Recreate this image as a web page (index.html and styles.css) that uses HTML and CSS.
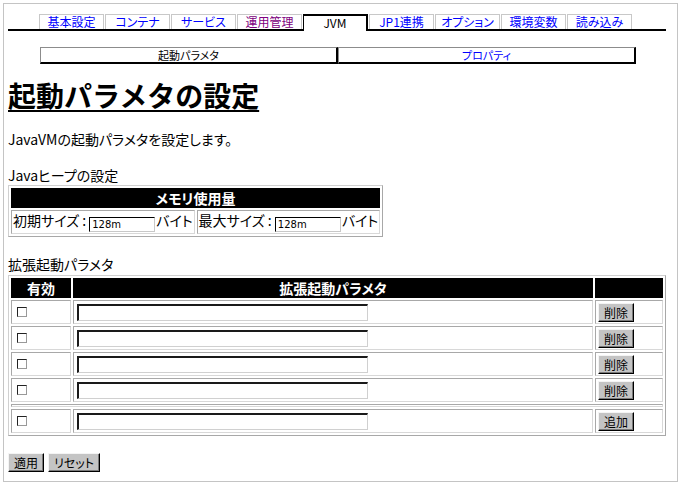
FILE: index.html
```html
<!DOCTYPE html>
<html lang="ja">
<head>
<meta charset="utf-8">
<title>起動パラメタの設定</title>
<link rel="stylesheet" href="styles.css">
</head>
<body>
<div class="frame">
  <div class="content">
    <ul class="tabs">
      <li class="tab"><a class="link">基本設定</a></li>
      <li class="tab"><a class="link">コンテナ</a></li>
      <li class="tab"><a class="link">サービス</a></li>
      <li class="tab"><a class="link visited">運用管理</a></li>
      <li class="tab active">JVM</li>
      <li class="tab"><a class="link">JP1連携</a></li>
      <li class="tab"><a class="link">オプション</a></li>
      <li class="tab"><a class="link">環境変数</a></li>
      <li class="tab"><a class="link">読み込み</a></li>
    </ul>
    <div class="subtabs">
      <div class="subtab current">起動パラメタ</div>
      <div class="subtab"><a class="link">プロパティ</a></div>
    </div>

    <h1 class="title">起動パラメタの設定</h1>
    <p class="desc">JavaVMの起動パラメタを設定します。</p>

    <p class="label">Javaヒープの設定</p>
    <table class="grid mem">
      <tr><th class="head" colspan="2">メモリ使用量</th></tr>
      <tr>
        <td class="memcell">初期サイズ : <input class="num" type="text" value="128m">バイト</td>
        <td class="memcell">最大サイズ : <input class="num" type="text" value="128m">バイト</td>
      </tr>
    </table>

    <p class="label label2">拡張起動パラメタ</p>
    <table class="grid params">
      <tr>
        <th class="head c1">有効</th>
        <th class="head c2">拡張起動パラメタ</th>
        <th class="head c3"></th>
      </tr>
      <tr>
        <td class="cell c1"><input class="chk" type="checkbox"></td>
        <td class="cell c2"><input class="txt" type="text"></td>
        <td class="cell c3"><button class="btn">削除</button></td>
      </tr>
      <tr>
        <td class="cell c1"><input class="chk" type="checkbox"></td>
        <td class="cell c2"><input class="txt" type="text"></td>
        <td class="cell c3"><button class="btn">削除</button></td>
      </tr>
      <tr>
        <td class="cell c1"><input class="chk" type="checkbox"></td>
        <td class="cell c2"><input class="txt" type="text"></td>
        <td class="cell c3"><button class="btn">削除</button></td>
      </tr>
      <tr>
        <td class="cell c1"><input class="chk" type="checkbox"></td>
        <td class="cell c2"><input class="txt" type="text"></td>
        <td class="cell c3"><button class="btn">削除</button></td>
      </tr>
      <tr><td class="sep" colspan="3"></td></tr>
      <tr>
        <td class="cell c1"><input class="chk" type="checkbox"></td>
        <td class="cell c2"><input class="txt" type="text"></td>
        <td class="cell c3"><button class="btn">追加</button></td>
      </tr>
    </table>

    <div class="actions">
      <button class="btn">適用</button>
      <button class="btn">リセット</button>
    </div>
  </div>
</div>
</body>
</html>
```

FILE: styles.css
```css
html, body {
  margin: 0;
  padding: 0;
  background: #fff;
}
body {
  font-family: "Noto Sans CJK JP", "Noto Sans", sans-serif;
  font-size: 14px;
  line-height: 16px;
  color: #000;
  padding: 3px;
  box-sizing: border-box;
  height: 485px;
  font-feature-settings: "palt";
}
.frame {
  border: 1px solid #c4c4c4;
  height: 479px;
  box-sizing: border-box;
  padding: 10px 0 0 4px;
}
.content {
  width: 658px;
}

/* main tabs */
.tabs {
  display: flex;
  gap: 1px;
  list-style: none;
  margin: 0;
  padding: 0 0 0 31px;
  height: 15px;
  border-bottom: 2px solid #000;
}
.tab {
  width: 65px;
  height: 15px;
  box-sizing: border-box;
  border: 1px solid #c8c8c8;
  border-bottom: none;
  font-size: 12px;
  line-height: 14px;
  text-align: center;
  white-space: nowrap;
  background: #fff;
}
.tab.active {
  height: 17px;
  border: 2px solid #000;
  border-left-width: 1px;
  border-bottom: none;
  line-height: 14px;
  color: #000;
}
.link {
  color: #0000ff;
  text-decoration: none;
}
.link.visited {
  color: #800080;
}

/* sub tabs */
.subtabs {
  display: flex;
  width: 596px;
  margin: 16px 0 0 32px;
}
.subtab {
  flex: 1;
  height: 17px;
  box-sizing: border-box;
  border-top: 1px solid #8c8c8c;
  border-left: 1px solid #8c8c8c;
  border-right: 2px solid #000;
  border-bottom: 2px solid #000;
  font-size: 11px;
  line-height: 14px;
  text-align: center;
}

/* heading + text */
.title {
  margin: 14px 0 0 0;
  font-size: 28px;
  line-height: 34px;
  font-weight: bold;
  text-decoration: underline;
  text-underline-offset: 3px;
  text-decoration-thickness: 2px;
  font-feature-settings: normal;
}
.desc {
  margin: 19px 0 0 0;
}
.label {
  margin: 20px 0 0 0;
}
.label2 {
  margin-top: 19px;
}

/* tables */
.grid {
  border-collapse: separate;
  border-spacing: 2px;
  border: 1px solid #b4b4b4;
  border-color: #d0d0d0 #a8a8a8 #a8a8a8 #d0d0d0;
}
.head {
  background: #000;
  color: #fff;
  font-weight: bold;
  font-size: 14px;
  line-height: 18px;
  padding: 0;
  border: 1px solid #000;
  text-align: center;
}
.mem {
  margin-top: 2px;
  width: 375px;
}
.memcell {
  border: 1px solid;
  border-color: #a8a8a8 #d8d8d8 #d8d8d8 #a8a8a8;
  padding: 1px 1px;
  white-space: nowrap;
  line-height: 17px;
}
.num {
  box-sizing: border-box;
  width: 66px;
  height: 15px;
  margin: 0 1px 0 0;
  padding: 0 2px;
  font-family: "DejaVu Sans", sans-serif;
  font-size: 10px;
  border-style: solid;
  border-width: 1px;
  border-color: #000 #c8c8c8 #c8c8c8 #000;
  vertical-align: -2px;
}

.params {
  margin-top: 3px;
  width: 658px;
}
.c1 { width: 58px; }
.c3 { width: 66px; }
.cell {
  border: 1px solid;
  border-color: #a8a8a8 #d8d8d8 #d8d8d8 #a8a8a8;
  padding: 0 1px;
  height: 24px;
  box-sizing: border-box;
  vertical-align: middle;
}
.sep {
  border: 1px solid;
  border-color: #a8a8a8 #d8d8d8 #d8d8d8 #a8a8a8;
  padding: 1px 0 0 0;
  height: 0;
}
.chk {
  appearance: none;
  -webkit-appearance: none;
  display: block;
  width: 10px;
  height: 10px;
  margin: 0 0 0 4px;
  box-sizing: border-box;
  border: 1px solid;
  border-color: #222 #999 #999 #222;
  background: #fff;
}
.txt {
  display: block;
  box-sizing: border-box;
  width: 291px;
  height: 17px;
  margin: 0 0 0 2px;
  padding: 0;
  border-style: solid;
  border-width: 2px 1px 1px 2px;
  border-color: #1a1a1a #d0d0d0 #d0d0d0 #1a1a1a;
  background: #fff;
}
.btn {
  font-family: "Noto Sans CJK JP", sans-serif;
  font-size: 12px;
  line-height: 15px;
  height: 19px;
  padding: 0 5px;
  margin: 0;
  background: #c4c4c4;
  color: #000;
  border: 1px solid;
  border-color: #f4f4f4 #000 #000 #f4f4f4;
  box-shadow: inset -1px -1px 0 #7a7a7a;
  font-feature-settings: "palt";
  display: block;
}
.cell .btn {
  margin-left: 1px;
}
.actions {
  display: flex;
  gap: 4px;
  margin-top: 17px;
}
```
